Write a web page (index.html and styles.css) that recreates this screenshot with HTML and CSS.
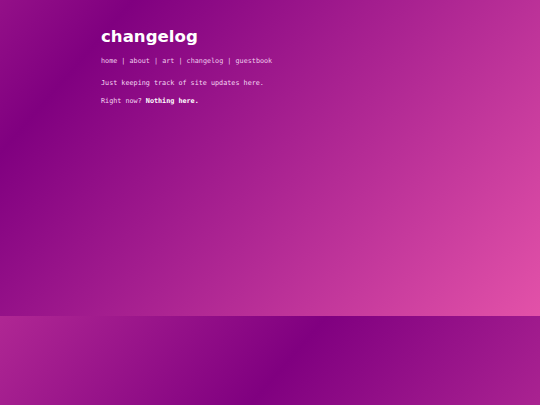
FILE: index.html
```html
<!DOCTYPE html>
<html lang="en">
<head>
<meta charset="utf-8">
<title>changelog</title>
<link rel="stylesheet" href="styles.css">
</head>
<body>
<main class="page">
  <h1 class="title">changelog</h1>
  <nav class="nav">
    <a href="#">home</a> | <a href="#">about</a> | <a href="#">art</a> | <a href="#">changelog</a> | <a href="#">guestbook</a>
  </nav>
  <p class="text">Just keeping track of site updates here.</p>
  <p class="text">Right now? <strong class="strong">Nothing here.</strong></p>
</main>
</body>
</html>
```
FILE: styles.css
```css
html {
  margin: 0;
  background-image: linear-gradient(131deg, #ff69b4 0%, #800080 33.33%, #ff69b4 66.67%, #800080 100%);
  background-size: 2160px 539px;
  background-position: -549px -223px;
  background-repeat: repeat;
}

body {
  margin: 0;
  padding: 27px 0 16px;
  color: #f4d8f2;
}

.page {
  max-width: 338px;
  margin: 0 auto;
}

.title {
  margin: 0 0 10px;
  font-family: "DejaVu Sans", sans-serif;
  font-weight: bold;
  font-size: 16.6px;
  line-height: 19px;
  color: #ffffff;
}

.nav {
  font-family: "DejaVu Sans Mono", monospace;
  font-size: 6.78px;
  line-height: 10.8px;
  color: #f0cdee;
  margin: 0 0 11.5px;
}

.nav a {
  color: inherit;
  text-decoration: none;
}

.text {
  font-family: "DejaVu Sans Mono", monospace;
  font-size: 6.78px;
  line-height: 10.8px;
  margin: 0 0 6.8px;
}

.strong {
  color: #ffffff;
  font-weight: bold;
}
```
